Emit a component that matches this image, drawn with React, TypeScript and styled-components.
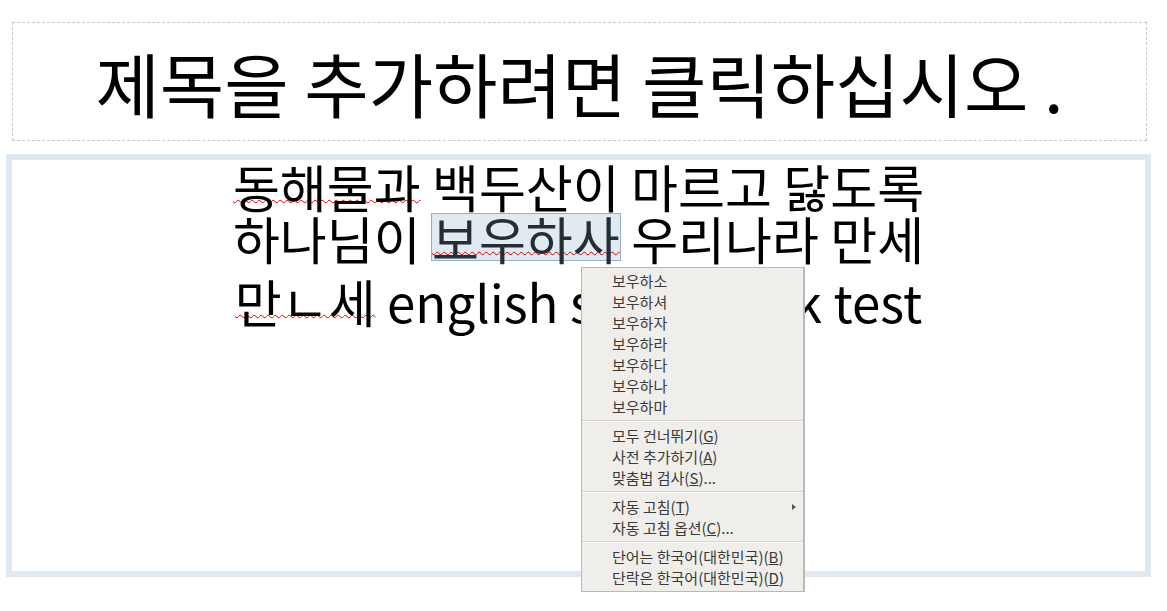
import React from "react";
import styled, { createGlobalStyle } from "styled-components";

const Global = createGlobalStyle`
  html, body { margin: 0; padding: 0; background: #ffffff; }
  body { font-family: "Noto Sans CJK KR", "Noto Sans", sans-serif; }
`;

const Page = styled.div`
  position: relative;
  width: 1167px;
  height: 611px;
  overflow: hidden;
  padding-top: 22px;
  box-sizing: border-box;
`;

const TitleBox = styled.div`
  box-sizing: border-box;
  margin-left: 12px;
  width: 1135px;
  height: 119px;
  border: 1px dashed #c8c8c8;
  display: flex;
  align-items: center;
  justify-content: center;
  padding-top: 2px;
`;

const TitleText = styled.div`
  font-size: 70px;
  line-height: 1;
  color: #000;
  white-space: nowrap;
`;

const BodyBox = styled.div`
  box-sizing: border-box;
  margin-top: 13px;
  margin-left: 6px;
  width: 1145px;
  height: 423px;
  border: 6px solid #e0e8f0;
  padding-top: 0;
  background: #fff;
  position: relative;
  z-index: 0;
  display: flex;
  flex-direction: column;
  align-items: center;
`;

const Para = styled.p<{ $gap?: number }>`
  margin: ${(p) => p.$gap ?? 0}px 0 0 0;
  font-size: 51px;
  line-height: 52px;
  color: #000;
  text-align: center;
  white-space: nowrap;
`;

const Misspelled = styled.span`
  text-decoration: underline wavy #e00000;
  text-decoration-thickness: 1px;
  text-underline-offset: -9px;
  text-decoration-skip-ink: none;
`;

const Selected = styled(Misspelled)`
  position: relative;
  color: #252d35;
  &::before {
    content: "";
    position: absolute;
    left: -1px;
    right: -1px;
    top: 12px;
    height: 46px;
    background: #e1e9f1;
    border: 1px solid #92b1cb;
    z-index: -1;
  }
`;

const Menu = styled.div`
  position: absolute;
  left: 581px;
  top: 267px;
  width: 224px;
  box-sizing: border-box;
  background: #f0eeeb;
  border: 1px solid #bcb9b4;
  border-right-width: 2px;
  padding: 2px 0 3px;
  font-size: 15px;
  color: #3a3a3a;
`;

const Item = styled.div`
  position: relative;
  height: 21px;
  line-height: 21px;
  padding-left: 30px;
  white-space: nowrap;
`;

const Separator = styled.div`
  height: 0;
  border-top: 1px solid #d6d3ce;
  border-bottom: 1px solid #faf9f8;
  margin: 3px 0 3px;
`;

const Arrow = styled.span`
  position: absolute;
  right: 7px;
  top: 8px;
  width: 0;
  height: 0;
  border-left: 4px solid #555;
  border-top: 3.5px solid transparent;
  border-bottom: 3.5px solid transparent;
`;

const suggestions = ["보우하소", "보우하셔", "보우하자", "보우하라", "보우하다", "보우하나", "보우하마"];

export default function App() {
  return (
    <Page>
      <Global />
      <TitleBox>
        <TitleText>제목을 추가하려면 클릭하십시오 .</TitleText>
      </TitleBox>
      <BodyBox>
        <Para>
          <Misspelled>동해물과</Misspelled> 백두산이 마르고 닳도록
          <br />
          하나님이 <Selected>보우하사</Selected> 우리나라 만세
        </Para>
        <Para $gap={11}>
          <Misspelled>만ㄴ세</Misspelled> english spellcheck test
        </Para>
      </BodyBox>
      <Menu>
        {suggestions.map((s) => (
          <Item key={s}>{s}</Item>
        ))}
        <Separator />
        <Item>
          모두 건너뛰기(<u>G</u>)
        </Item>
        <Item>
          사전 추가하기(<u>A</u>)
        </Item>
        <Item>
          맞춤법 검사(<u>S</u>)...
        </Item>
        <Separator />
        <Item>
          자동 고침(<u>T</u>)
          <Arrow />
        </Item>
        <Item>
          자동 고침 옵션(<u>C</u>)...
        </Item>
        <Separator />
        <Item>
          단어는 한국어(대한민국)(<u>B</u>)
        </Item>
        <Item>
          단락은 한국어(대한민국)(<u>D</u>)
        </Item>
      </Menu>
    </Page>
  );
}
